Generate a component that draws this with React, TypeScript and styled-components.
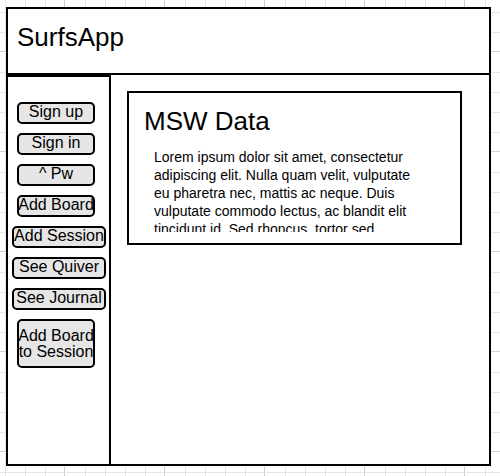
import React from "react";
import styled, { createGlobalStyle } from "styled-components";

const GlobalStyle = createGlobalStyle`
  *, *::before, *::after {
    box-sizing: border-box;
  }

  body {
    margin: 0;
    color: #000;
    background-color: #fff;
    font-family: "Liberation Sans", Arial, Helvetica, sans-serif;
  }
`;

const Canvas = styled.div`
  display: flex;
  min-height: 100vh;
  padding: 7px 9px 10px 6px;
  background-image:
    linear-gradient(to right, #d0d0d0 1px, #fff 1px, #fff 2px, transparent 2px),
    linear-gradient(to bottom, #d0d0d0 1px, #fff 1px, #fff 2px, transparent 2px),
    linear-gradient(to right, #e6e6e6 1px, transparent 1px),
    linear-gradient(to bottom, #e6e6e6 1px, transparent 1px);
  background-size: 100px 100px, 100px 100px, 20px 20px, 20px 20px;
  background-position: 64px 51px, 64px 51px, 5px 12px, 5px 12px;
`;

const Frame = styled.div`
  display: flex;
  flex: 1;
  flex-direction: column;
  border: 2px solid #000;
  background: #fff;
`;

const Header = styled.header`
  padding: 13px 9px 21px;
  border-bottom: 2px solid #000;
`;

const Title = styled.h1`
  margin: 0;
  font-size: 26px;
  font-weight: 400;
  line-height: 30px;
`;

const Body = styled.div`
  display: flex;
  flex: 1;
`;

const Sidebar = styled.nav`
  display: flex;
  flex: 0 0 103px;
  flex-direction: column;
  align-items: flex-start;
  gap: 9px;
  padding: 25px 3px 25px 4px;
  border-top: 2px solid #000;
  border-right: 2px solid #000;
`;

const ActionButton = styled.button<{ $wide?: boolean; $tall?: boolean }>`
  display: flex;
  align-items: center;
  justify-content: center;
  width: ${({ $wide }) => ($wide ? "94px" : "78px")};
  height: ${({ $tall }) => ($tall ? "49px" : "22px")};
  margin: 0 0 0 ${({ $wide }) => ($wide ? "0" : "5px")};
  padding: 0 0 ${({ $tall }) => ($tall ? "0" : "2px")};
  border: 2px solid #000;
  border-radius: 5px;
  background: #e6e6e6;
  color: #000;
  font-family: inherit;
  font-size: 16px;
  line-height: 16px;
  white-space: pre;
  cursor: pointer;
`;

const Main = styled.main`
  flex: 1;
  min-width: 0;
  padding: 16px 27px 16px 16px;
`;

const Card = styled.section`
  padding: 13px 40px 11px 15px;
  border: 2px solid #000;
`;

const CardTitle = styled.h2`
  margin: 0 0 12px;
  font-size: 26px;
  font-weight: 400;
  line-height: 30px;
`;

const CardText = styled.p`
  height: 84px;
  margin: 0 0 0 10px;
  overflow: hidden;
  font-size: 14px;
  line-height: 18px;
`;

const actions = [
  { label: "Sign up" },
  { label: "Sign in" },
  { label: "^ Pw" },
  { label: "Add Board" },
  { label: "Add Session", wide: true },
  { label: "See Quiver", wide: true },
  { label: "See Journal", wide: true },
  { label: "Add Board\nto Session", tall: true },
];

export default function App() {
  return (
    <>
      <GlobalStyle />
      <Canvas>
        <Frame>
          <Header>
            <Title>SurfsApp</Title>
          </Header>
          <Body>
            <Sidebar>
              {actions.map(({ label, wide, tall }) => (
                <ActionButton key={label} type="button" $wide={wide} $tall={tall}>
                  {label}
                </ActionButton>
              ))}
            </Sidebar>
            <Main>
              <Card>
                <CardTitle>MSW Data</CardTitle>
                <CardText>
                  Lorem ipsum dolor sit amet, consectetur adipiscing elit. Nulla
                  quam velit, vulputate eu pharetra nec, mattis ac neque. Duis
                  vulputate commodo lectus, ac blandit elit tincidunt id. Sed
                  rhoncus, tortor sed
                </CardText>
              </Card>
            </Main>
          </Body>
        </Frame>
      </Canvas>
    </>
  );
}
